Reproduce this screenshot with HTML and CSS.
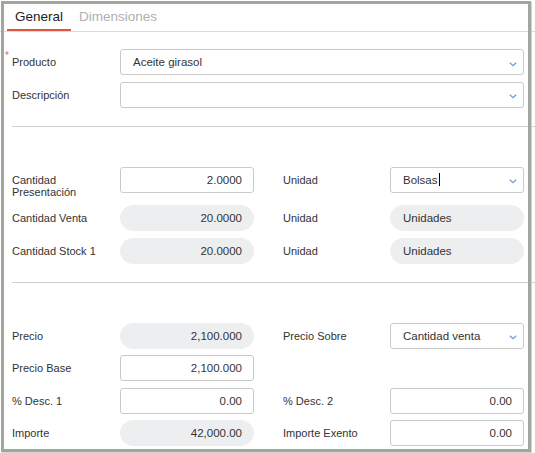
FILE: index.html
```html
<!DOCTYPE html>
<html lang="es">
<head>
    <meta charset="UTF-8">
    <title>Línea de pedido</title>
    <link rel="stylesheet" href="styles.css">
</head>
<body>
    <div class="panel">
        <div class="tabs">
            <div class="tab active">General</div>
            <div class="tab">Dimensiones</div>
        </div>

        <div class="section first">
            <div class="row">
                <div class="label required">Producto</div>
                <div class="field select wide">
                    <span>Aceite girasol</span>
                    <svg class="chevron" width="8" height="5" viewBox="0 0 8 5"><path d="M0.8 0.8 L4 3.8 L7.2 0.8" /></svg>
                </div>
            </div>
            <div class="row">
                <div class="label">Descripción</div>
                <div class="field select wide">
                    <span></span>
                    <svg class="chevron" width="8" height="5" viewBox="0 0 8 5"><path d="M0.8 0.8 L4 3.8 L7.2 0.8" /></svg>
                </div>
            </div>
        </div>

        <div class="divider"></div>

        <div class="section">
            <div class="row">
                <div class="label">Cantidad<br>Presentación</div>
                <div class="field num">2.0000</div>
                <div class="label right">Unidad</div>
                <div class="field select">
                    <span>Bolsas<i class="caret"></i></span>
                    <svg class="chevron" width="8" height="5" viewBox="0 0 8 5"><path d="M0.8 0.8 L4 3.8 L7.2 0.8" /></svg>
                </div>
            </div>
            <div class="row">
                <div class="label">Cantidad Venta</div>
                <div class="field num readonly">20.0000</div>
                <div class="label right">Unidad</div>
                <div class="field readonly">Unidades</div>
            </div>
            <div class="row">
                <div class="label">Cantidad Stock 1</div>
                <div class="field num readonly">20.0000</div>
                <div class="label right">Unidad</div>
                <div class="field readonly">Unidades</div>
            </div>
        </div>

        <div class="divider"></div>

        <div class="section">
            <div class="row">
                <div class="label">Precio</div>
                <div class="field num readonly">2,100.000</div>
                <div class="label right">Precio Sobre</div>
                <div class="field select">
                    <span>Cantidad venta</span>
                    <svg class="chevron" width="8" height="5" viewBox="0 0 8 5"><path d="M0.8 0.8 L4 3.8 L7.2 0.8" /></svg>
                </div>
            </div>
            <div class="row">
                <div class="label">Precio Base</div>
                <div class="field num">2,100.000</div>
            </div>
            <div class="row">
                <div class="label">% Desc. 1</div>
                <div class="field num">0.00</div>
                <div class="label right">% Desc. 2</div>
                <div class="field num">0.00</div>
            </div>
            <div class="row">
                <div class="label">Importe</div>
                <div class="field num readonly">42,000.00</div>
                <div class="label right">Importe Exento</div>
                <div class="field num">0.00</div>
            </div>
        </div>

        <div class="frame"></div>
    </div>
</body>
</html>
```

FILE: styles.css
```css
body {
    margin: 0;
    background: #fff;
    font-family: "Liberation Sans", Arial, sans-serif;
    color: #333;
}
.panel {
    position: relative;
    width: 535px;
    height: 453px;
    overflow: hidden;
}
.frame {
    position: absolute;
    left: 1px;
    top: 1px;
    width: 524px;
    height: 445px;
    border: 3px solid #a3a69c;
    box-shadow: 1px 1px 0 #d4d5d0;
    pointer-events: none;
}
.tabs {
    display: flex;
    height: 31px;
    padding-left: 7px;
    border-bottom: 1px solid #dcdcdc;
}
.tab {
    padding: 9px 8px 4px;
    font-size: 13.5px;
    line-height: 16px;
    color: #b0b0b0;
    border-bottom: 2px solid transparent;
}
.tab.active {
    color: #222;
    border-bottom-color: #e2553f;
}
.section {
    padding: 39.5px 0 18.5px 12px;
}
.section.first {
    padding-top: 17px;
}
.divider {
    height: 1px;
    margin-left: 12px;
    background: #d0d0d0;
}
.row {
    display: flex;
    align-items: flex-start;
}
.row + .row {
    margin-top: 6.5px;
}
.label {
    width: 108px;
    flex-shrink: 0;
    padding-top: 7px;
    font-size: 11px;
    line-height: 12.5px;
    color: #333;
}
.label.right {
    width: 107px;
    margin-left: 29px;
}
.label.required {
    position: relative;
}
.label.required::before {
    content: "*";
    position: absolute;
    left: -7px;
    top: 2px;
    font-size: 10px;
    line-height: 10px;
    color: #e06a6a;
}
.field {
    box-sizing: border-box;
    width: 134px;
    height: 26px;
    padding: 0 11px 0 12px;
    border: 1px solid #cacaca;
    border-radius: 3px;
    display: flex;
    align-items: center;
    font-size: 11.5px;
    color: #333;
    white-space: nowrap;
}
.field.wide {
    width: 404px;
}
.field.num {
    justify-content: flex-end;
}
.field.readonly {
    border-color: #edeef0;
    background: #edeef0;
    border-radius: 13px;
}
.field.select {
    justify-content: space-between;
    padding-right: 6px;
}
.chevron {
    margin-top: 4px;
}
.chevron path {
    fill: none;
    stroke: #6b9bd6;
    stroke-width: 1.2;
}
.caret {
    display: inline-block;
    width: 1px;
    height: 13px;
    margin-left: 1px;
    vertical-align: -2px;
    background: #000;
}
```
